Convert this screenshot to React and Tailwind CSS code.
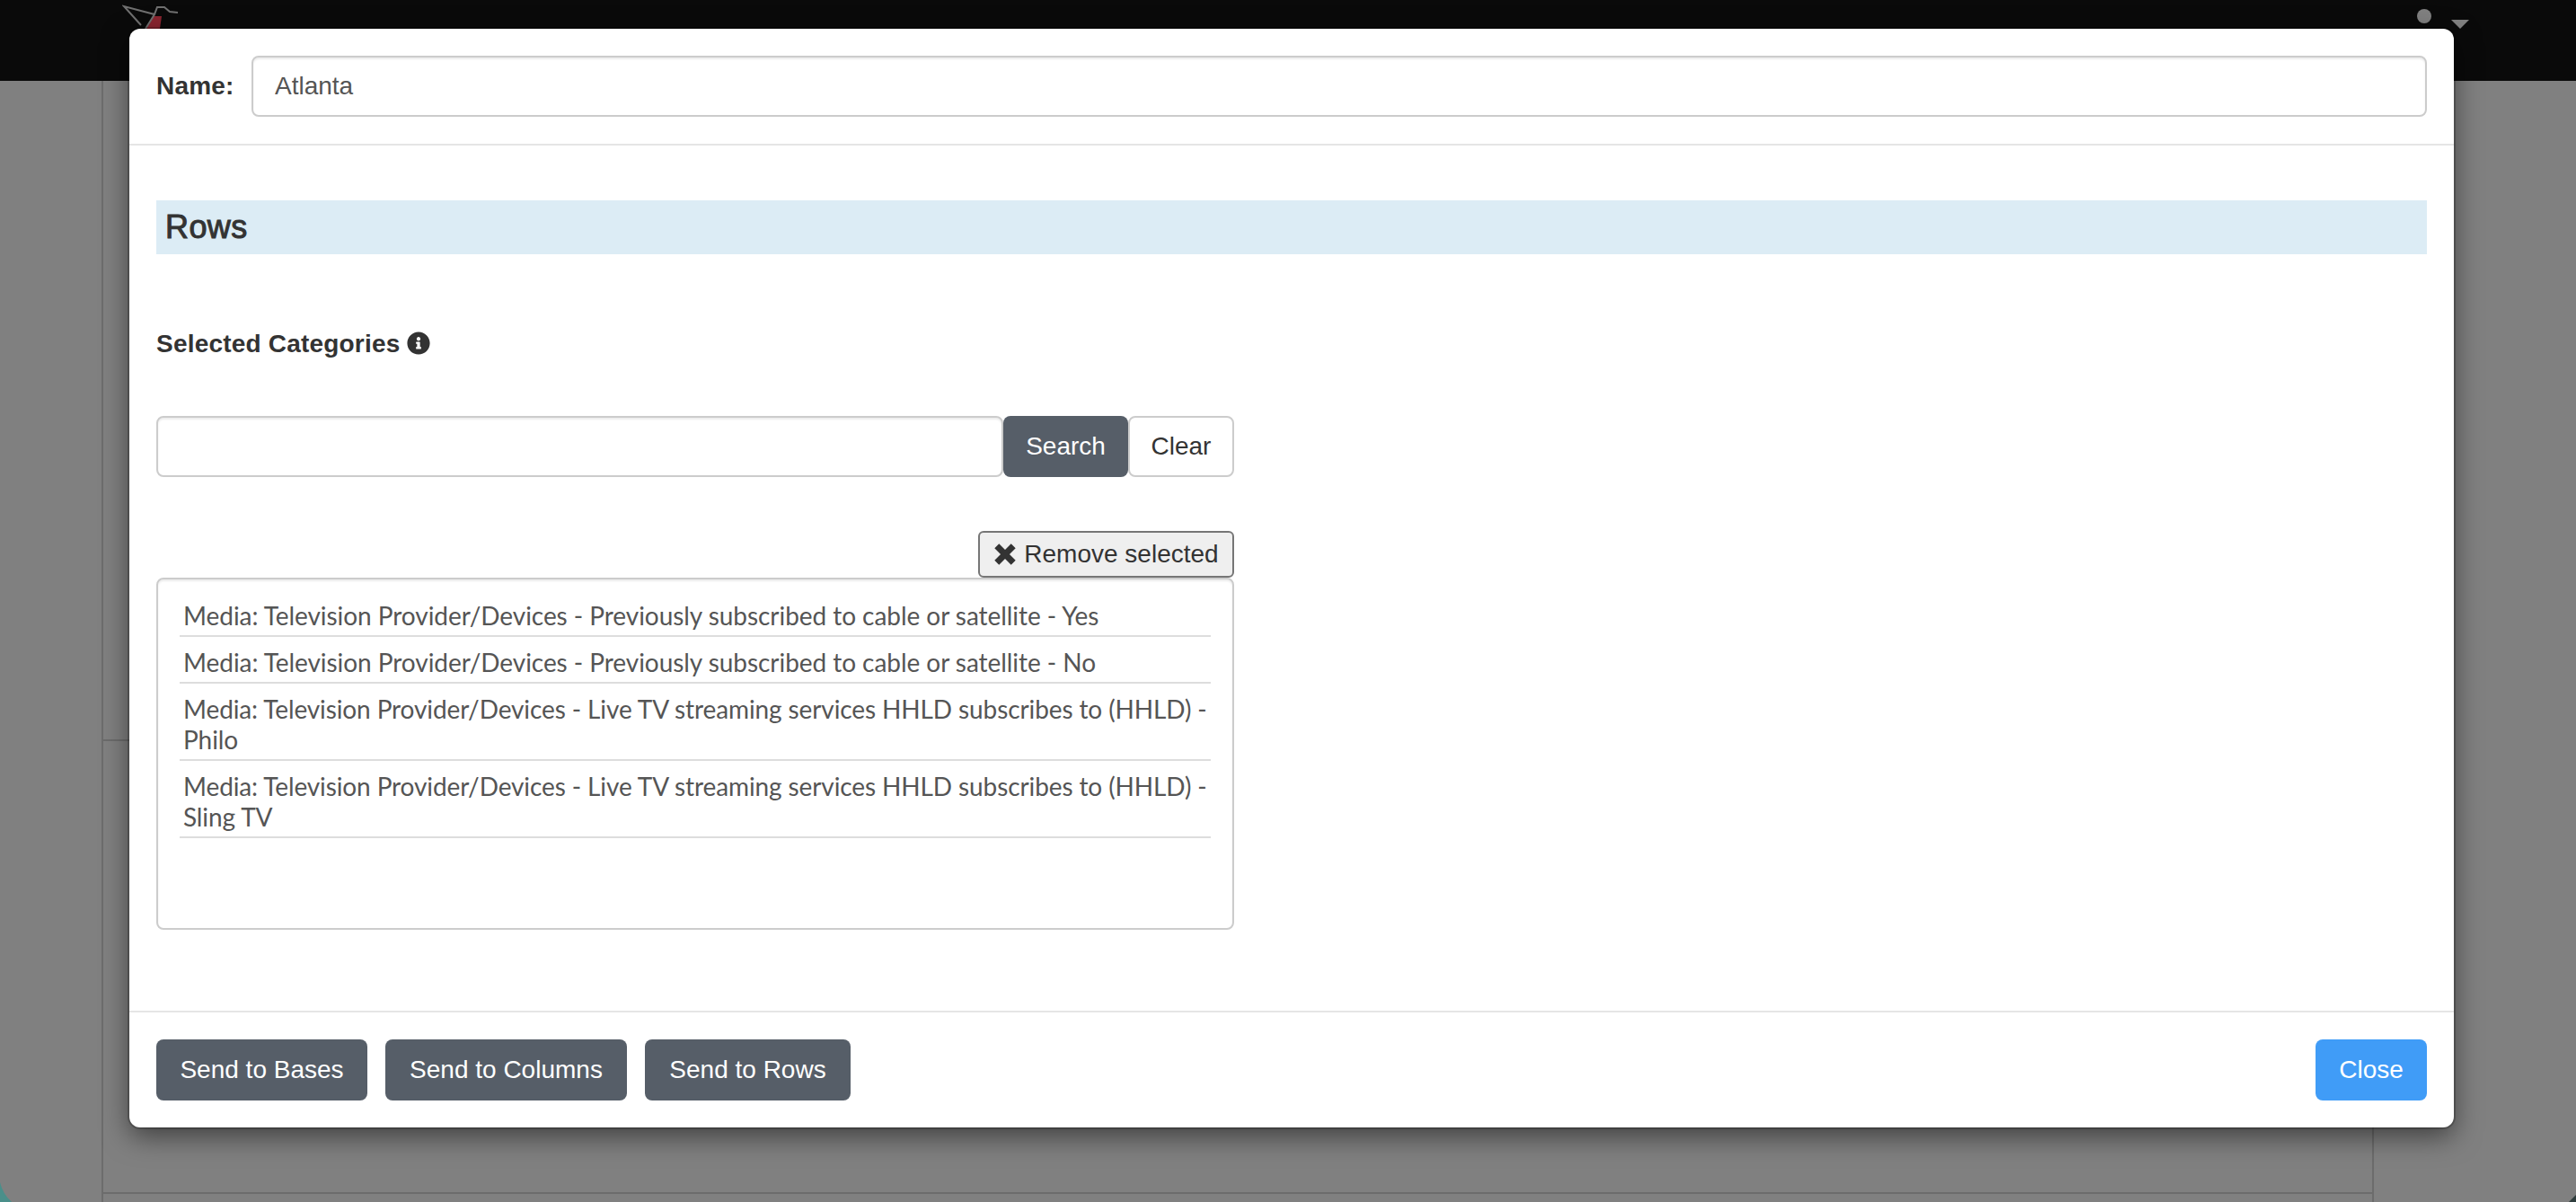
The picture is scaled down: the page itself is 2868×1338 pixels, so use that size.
const rows = [
  ["Media: Television Provider/Devices - Previously subscribed to cable or satellite - Yes"],
  ["Media: Television Provider/Devices - Previously subscribed to cable or satellite - No"],
  ["Media: Television Provider/Devices - Live TV streaming services HHLD subscribes to (HHLD) -", "Philo"],
  ["Media: Television Provider/Devices - Live TV streaming services HHLD subscribes to (HHLD) -", "Sling TV"],
];

function Logo() {
  return (
    <svg width="64" height="32" viewBox="0 0 64 32" className="block">
      <path d="M35 18 L44 18 L42 32 L27 32 Z" fill="#8b2530" />
      <path d="M21 28 L2 7 L36 16 L39 8 L47 8 L53 13 L62 14 M36 16 L26 32" fill="none" stroke="#707070" strokeWidth="2" />
    </svg>
  );
}

function DarkButton({ children, className = "" }) {
  return (
    <button className={"h-[68px] rounded-lg bg-[#565e68] text-[28px] text-white " + className}>{children}</button>
  );
}

export default function App() {
  return (
    <div className="relative h-[1338px] w-[2868px] overflow-hidden bg-[#808080] font-['Liberation_Sans',sans-serif] text-[#333]">
      <header className="flex h-[90px] items-start justify-between bg-[#0a0a0a] pl-[136px] pr-[119px]">
        <Logo />
        <div className="flex items-start gap-[19px] pt-[10px]">
          <svg width="22" height="40" viewBox="0 0 22 40" className="block">
            <circle cx="11" cy="8" r="8" fill="#808080" />
            <path d="M0 36 C0 26 22 26 22 36 Z" fill="#808080" />
          </svg>
          <div className="mt-[12px] h-0 w-0 border-x-[10px] border-t-[10px] border-x-transparent border-t-[#808080]" />
        </div>
      </header>

      <main className="ml-[113px] mr-[225px] h-[1248px] border-x-2 border-[#6c6c6c]">
        <div className="h-[735px] border-b-2 border-[#6c6c6c]" />
        <div className="h-[504px] border-b-2 border-[#6c6c6c]" />
      </main>

      <svg width="14" height="22" viewBox="0 0 14 22" className="absolute bottom-0 left-0 block">
        <path d="M0 0 Q3 13 13 22 L0 22 Z" fill="#4a8f8a" />
      </svg>
      <svg width="8" height="8" viewBox="0 0 8 8" className="absolute bottom-0 right-0 block">
        <path d="M8 0 L8 8 L0 8 Z" fill="#2f3d3d" />
      </svg>

      <section className="absolute left-[144px] top-[32px] flex h-[1223px] w-[2588px] flex-col rounded-xl bg-white shadow-[0_0_0_2px_rgba(0,0,0,0.2),0_10px_30px_rgba(0,0,0,0.5)]">
        <div className="flex h-[130px] items-start gap-5 border-b-2 border-[#e5e5e5] px-[30px] pt-[30px]">
          <label className="flex h-[68px] w-[86px] items-center whitespace-nowrap text-[28px] font-bold tracking-[0.2px]">Name:</label>
          <input
            readOnly
            value="Atlanta"
            className="h-[68px] flex-1 rounded-lg border-2 border-[#ccc] bg-white px-[24px] text-[28px] text-[#555] shadow-[inset_0_2px_2px_rgba(0,0,0,0.075)] outline-none"
          />
        </div>

        <div className="flex-1 px-[30px] pt-[61px]">
          <h2 className="flex h-[60px] items-center bg-[#dcecf5] px-[10px] text-[36px] leading-none tracking-[0.4px] [-webkit-text-stroke:1px_#333]">Rows</h2>

          <div className="mt-[84px] flex items-center gap-2 text-[28px] font-bold leading-[32px] tracking-[0.2px]">
            <span>Selected Categories</span>
            <svg width="26" height="26" viewBox="0 0 512 512" className="-mt-[3px] block">
              <path fill="#333" d="M256 8C119 8 8 119 8 256s111 248 248 248 248-111 248-248S393 8 256 8zm0 110c23 0 42 19 42 42s-19 42-42 42-42-19-42-42 19-42 42-42zm56 254c0 7-5 12-12 12h-88c-7 0-12-5-12-12v-24c0-7 5-12 12-12h12v-64h-12c-7 0-12-5-12-12v-24c0-7 5-12 12-12h64c7 0 12 5 12 12v100h12c7 0 12 5 12 12v24z" />
            </svg>
          </div>

          <div className="w-[1200px]">
            <div className="mt-[64px] flex h-[68px]">
              <input readOnly className="w-[943px] rounded-lg border-2 border-[#ccc] shadow-[inset_0_2px_2px_rgba(0,0,0,0.075)] outline-none" />
              <DarkButton className="w-[139px]">Search</DarkButton>
              <button className="flex-1 rounded-lg border-2 border-[#ccc] bg-white text-[28px] text-[#333]">Clear</button>
            </div>

            <div className="mt-[60px] flex justify-end">
              <button className="flex h-[52px] w-[285px] items-center justify-center gap-2 rounded-md border-2 border-[#767676] bg-[#efefef] text-[28px] text-[#333]">
                <svg width="26" height="26" viewBox="0 0 24 24" className="block">
                  <path fill="none" stroke="#333" strokeWidth="6.5" d="M3.5 3.5 L20.5 20.5 M20.5 3.5 L3.5 20.5" />
                </svg>
                <span>Remove selected</span>
              </button>
            </div>

            <div className="h-[392px] rounded-lg border-2 border-[#ccc] pl-[24px] pr-[24px] pt-[12px] font-['Lato',sans-serif] text-[28px] leading-[34px] text-[#555] shadow-[inset_0_2px_2px_rgba(0,0,0,0.075)]">
              {rows.map((r, i) => (
                <div key={i} className={"border-b-2 border-[#ddd] pb-[5px] pl-1 pt-[11px] whitespace-nowrap " + (r.length > 1 ? "tracking-[-0.11px]" : "tracking-[-0.05px]")}>
                  {r.map((line) => (
                    <div key={line}>{line}</div>
                  ))}
                </div>
              ))}
            </div>
          </div>
        </div>

        <footer className="flex h-[130px] items-start justify-between border-t-2 border-[#e5e5e5] px-[30px] pt-[30px]">
          <div className="flex gap-5">
            <DarkButton className="w-[235px]">Send to Bases</DarkButton>
            <DarkButton className="w-[269px]">Send to Columns</DarkButton>
            <DarkButton className="w-[229px]">Send to Rows</DarkButton>
          </div>
          <button className="h-[68px] w-[124px] rounded-lg bg-[#409cf7] text-[28px] text-white">Close</button>
        </footer>
      </section>
    </div>
  );
}
